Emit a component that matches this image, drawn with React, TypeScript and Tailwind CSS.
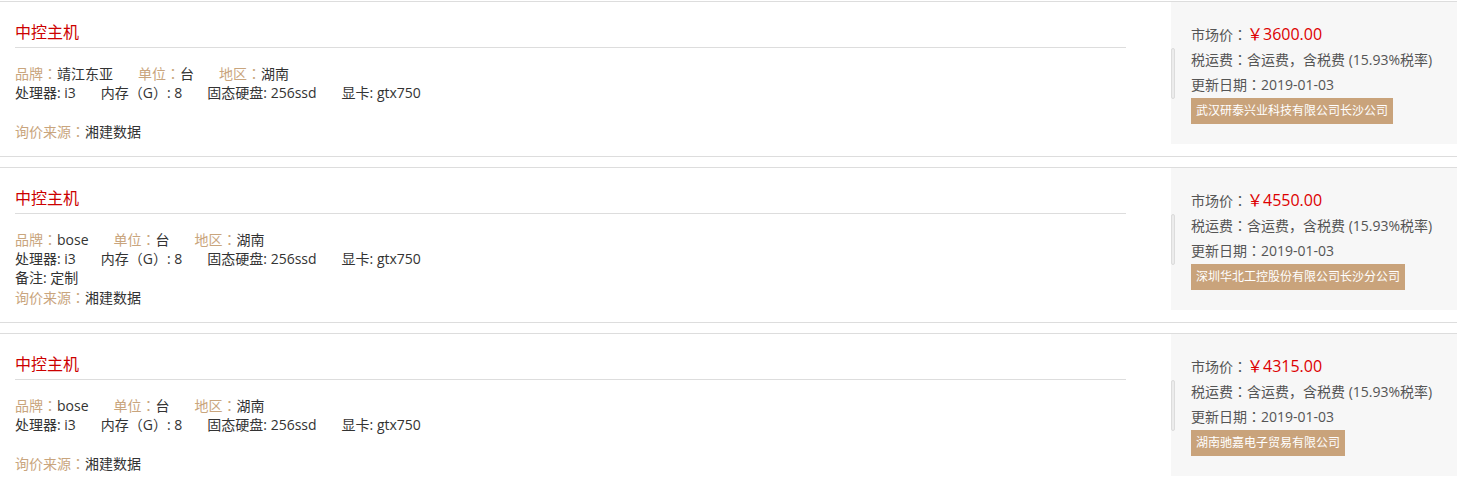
import React from "react";

type Item = {
  brand: string;
  remark?: string;
  price: string;
  company: string;
};

const items: Item[] = [
  { brand: "靖江东亚", price: "￥3600.00", company: "武汉研泰兴业科技有限公司长沙公司" },
  { brand: "bose", remark: "定制", price: "￥4550.00", company: "深圳华北工控股份有限公司长沙分公司" },
  { brand: "bose", price: "￥4315.00", company: "湖南驰嘉电子贸易有限公司" },
];

function C() {
  return <span className="font-['Noto_Sans_CJK_TC',sans-serif]">：</span>;
}

function Card({ it }: { it: Item }) {
  return (
    <div className="flex border-y border-[#dddddd] bg-white">
      <div className="flex-1 pl-[15px] pr-[45px] pb-[15px]">
        <div className="pt-[20px] pb-[5px] border-b border-[#dddddd] text-[16px] leading-[20px] text-[#cc0000]">
          中控主机
        </div>
        <div className="mt-[16px] text-[14px] leading-[19px] text-[#333333]">
          <div className="flex h-[19px] gap-x-[25px]">
            <span>
              <span className="text-[#c9a57d]">品牌<C /></span>
              {it.brand}
            </span>
            <span>
              <span className="text-[#c9a57d]">单位<C /></span>台
            </span>
            <span>
              <span className="text-[#c9a57d]">地区<C /></span>湖南
            </span>
          </div>
          <div className="flex h-[19px] gap-x-[25px]">
            <span>处理器: i3</span>
            <span>内存（G）: 8</span>
            <span>固态硬盘: 256ssd</span>
            <span>显卡: gtx750</span>
          </div>
          <div className="h-[19px]">{it.remark ? <span>备注: {it.remark}</span> : null}</div>
          <div className="mt-[1px] h-[19px]">
            <span className="text-[#c9a57d]">询价来源<C /></span>湘建数据
          </div>
        </div>
      </div>
      <div className="relative w-[286px] self-start bg-[#f7f7f7] pl-[20px] pt-[20px] pb-[20px] text-[14px] leading-[25px] text-[#555555]">
        <div className="absolute left-0 top-[46px] h-[51px] w-[4px] rounded-[2px] border border-[#dcdcdc] bg-[#ececec]" />
        <div className="h-[25px]">
          市场价<C /><span className="text-[16px] text-[#dd0000]">{it.price}</span>
        </div>
        <div className="h-[25px]">税运费<C />含运费，含税费 (15.93%税率)</div>
        <div className="h-[25px]">更新日期<C />2019-01-03</div>
        <div className="mt-[1px] inline-block bg-[#c9a37b] px-[5px] text-[12px] leading-[26px] text-white">
          {it.company}
        </div>
      </div>
    </div>
  );
}

export default function App() {
  return (
    <div className="min-h-screen bg-white pt-[1px] font-['Open_Sans','Noto_Sans_CJK_SC',sans-serif]">
      <div className="flex flex-col gap-[10px]">
        {items.map((it, i) => (
          <Card key={i} it={it} />
        ))}
      </div>
    </div>
  );
}
